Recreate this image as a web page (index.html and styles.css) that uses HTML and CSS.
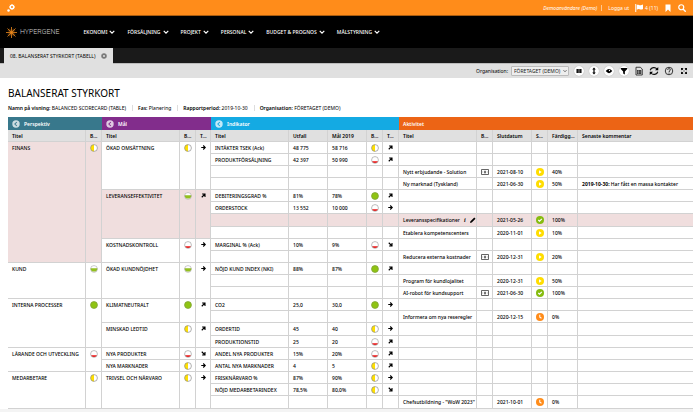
FILE: index.html
```html
<!DOCTYPE html>
<html lang="sv">
<head>
<meta charset="utf-8">
<title>Balanserat styrkort</title>
<link rel="stylesheet" href="styles.css">
</head>
<body>
<svg class="sprite" aria-hidden="true">
  <symbol id="half" viewBox="0 0 14 14"><circle cx="7" cy="7" r="6" fill="#fff"/><path d="M7 1a6 6 0 0 0 0 12z" fill="#ffe000"/><circle cx="7" cy="7" r="6" fill="none" stroke="#8c8c8c" stroke-width="1.2"/></symbol>
  <symbol id="low" viewBox="0 0 14 14"><circle cx="7" cy="7" r="6" fill="#fff"/><path d="M1.600 9h10.800a6 6 0 0 1-10.800 0z" fill="#f01414"/><circle cx="7" cy="7" r="6" fill="none" stroke="#8c8c8c" stroke-width="1"/></symbol>
  <symbol id="high" viewBox="0 0 14 14"><circle cx="7" cy="7" r="6" fill="#fff"/><path d="M1 5.500h12a6 6 0 1 1-12 0z" fill="#93c01f"/><circle cx="7" cy="7" r="6" fill="none" stroke="#8c8c8c" stroke-width=".8"/></symbol>
  <symbol id="full" viewBox="0 0 14 14"><circle cx="7" cy="7" r="6" fill="#8fc412" stroke="#81a33a" stroke-width="1.4"/></symbol>
  <symbol id="right" viewBox="0 0 10 10"><path d="M.5 5h8M4.500 1 8.500 5l-4 4" fill="none" stroke="#000" stroke-width="2.200"/></symbol>
  <symbol id="up" viewBox="0 0 10 10"><path d="M1.500 8.500l6-6M2.200 2h5.800v5.800" fill="none" stroke="#000" stroke-width="2.200"/></symbol>
  <symbol id="down" viewBox="0 0 10 10"><path d="M1.500 1.500l6 6M2.200 8h5.800V2.200" fill="none" stroke="#000" stroke-width="2.200"/></symbol>
  <symbol id="play" viewBox="0 0 14 14"><circle cx="7" cy="7" r="7" fill="#fd0"/><path d="M5.200 3.800 10 7l-4.800 3.200z" fill="#fff"/></symbol>
  <symbol id="done" viewBox="0 0 14 14"><circle cx="7" cy="7" r="7" fill="#86bc10"/><path d="M4 7l2.200 2.200L10.200 5" fill="none" stroke="#fff" stroke-width="2"/></symbol>
  <symbol id="clock" viewBox="0 0 14 14"><circle cx="7" cy="7" r="7" fill="#ff8c1a"/><path d="M6.600 3v4.200l3 2" fill="none" stroke="#fff" stroke-width="1.800"/></symbol>
  <symbol id="money" viewBox="0 0 16 12"><path d="M1 1h14v10H1z" fill="#fff" stroke="#333" stroke-width="1.500"/><ellipse cx="8" cy="6" rx="2" ry="3" fill="#666"/><path d="M3.500 4v4M12.500 4v4" stroke="#aaa"/></symbol>
  <symbol id="chev" viewBox="0 0 10 10"><path d="M1.200 3 5 6.800 8.800 3" fill="none" stroke="currentColor" stroke-width="2"/></symbol>
  <symbol id="back" viewBox="0 0 14 14"><circle cx="7" cy="7" r="6.500" fill="#fff" fill-opacity=".75"/><path d="M8.500 3.500 5 7l3.500 3.500" fill="none" stroke="currentColor" stroke-width="1.800"/></symbol>
</svg>

<header>
  <div class="topbar">
    <a class="link" href="#" aria-label="Inställningar"><svg class="i8" viewBox="0 0 16 16"><circle cx="10" cy="6" r="3.600" fill="none" stroke="#fff" stroke-width="2.800"/><path d="M10 0v2M10 10v2M4 6h2M14 6h2M5.800 1.800l1.500 1.500M12.700 8.700l1.500 1.500M14.200 1.800l-1.500 1.500" stroke="#fff" stroke-width="1.600"/><circle cx="3" cy="12.800" r="2.500" fill="#fff"/></svg></a>
    <div class="user">
      <span class="name">Demoanvändare (Demo)</span>
      <a class="link" href="#">Logga ut</a>
      <a class="link" href="#"><svg class="i8" viewBox="0 0 16 16"><path d="M1.500 0v16" stroke="#fff" stroke-width="2"/><path d="M3.500 2c3-2 5 1.500 8 .5L16 1v9c-3 2-5 1-7 .3-2-.6-3.500 0-5.500 1.200z" fill="#fff"/></svg>4 (11)</a>
      <a class="link" href="#" aria-label="Bokmärken"><svg class="i8" viewBox="0 0 16 16"><path d="M3 1h10v15L8 11l-5 5z" fill="#fff"/></svg></a>
      <a class="link" href="#" aria-label="Sök"><svg class="i8" viewBox="0 0 16 16"><circle cx="6.500" cy="6.500" r="5" fill="none" stroke="#fff" stroke-width="2.400"/><path d="M10 10l5.500 5.500" stroke="#fff" stroke-width="2.800"/></svg></a>
    </div>
  </div>
  <nav class="nav">
    <a class="logo" href="#"><svg class="star" viewBox="0 0 22 22"><g stroke="#f08a1c" stroke-width="1.600"><path d="M11 0v22M0 11h22M3 3l16 16M19 3 3 19"/><path d="M7 3.500l8 15M15 3.500l-8 15M3.500 7l15 8M18.500 7l-15 8" stroke-width=".9"/></g></svg>HYPERGENE</a>
    <a class="link" href="#">EKONOMI<svg class="i6"><use href="#chev"/></svg></a>
    <a class="link" href="#">FÖRSÄLJNING<svg class="i6"><use href="#chev"/></svg></a>
    <a class="link" href="#">PROJEKT<svg class="i6"><use href="#chev"/></svg></a>
    <a class="link" href="#">PERSONAL<svg class="i6"><use href="#chev"/></svg></a>
    <a class="link" href="#">BUDGET &amp; PROGNOS<svg class="i6"><use href="#chev"/></svg></a>
    <a class="link" href="#">MÅLSTYRNING<svg class="i6"><use href="#chev"/></svg></a>
  </nav>
  <div class="tabs">
    <div class="tab">08. BALANSERAT STYRKORT (TABELL)<button class="bare" aria-label="Stäng"><svg class="i6" viewBox="0 0 12 12"><circle cx="6" cy="6" r="5.500" fill="#777"/><path d="M3.800 3.800l4.400 4.400M8.200 3.800 3.800 8.200" stroke="#e0e0e0" stroke-width="1.500"/></svg></button></div>
  </div>
  <div class="toolbar">
    <label for="org">Organisation:</label>
    <span class="pick"><select id="org"><option>FÖRETAGET (DEMO)</option></select><svg><use href="#chev"/></svg></span>
    <button class="tool round" aria-label="Kolumner"><svg viewBox="0 0 20 20"><path d="M5 6h2.800v8H5zM8.600 6h2.800v8H8.600zM12.200 6H15v8h-2.800z"/></svg></button>
    <button class="tool round" aria-label="Radhöjd"><svg viewBox="0 0 20 20"><path d="M10 3l3.500 4h-2.300v6h2.300L10 17l-3.500-4h2.300V7H6.500z"/></svg></button>
    <button class="tool round" aria-label="Visa"><svg viewBox="0 0 20 20"><path d="M3.500 10q6.500-8.500 13 0-6.500 8.500-13 0z"/><circle cx="11" cy="9" r="1.300" fill="#fff"/></svg></button>
    <button class="tool round" aria-label="Filter"><svg viewBox="0 0 20 20"><path d="M3.500 4h13v2l-4.800 4.800V17l-3.400-2v-4.200L3.500 6z"/></svg></button>
    <button class="tool" aria-label="Excel"><svg viewBox="0 0 20 20"><path d="M4 2.500h8.500L16.500 6v12H4z" fill="none" stroke="#222" stroke-width="1.700"/><path d="M6 8.500h8.500v7H6z"/><path d="M6 10.800h8.500M6 13.200h8.500M9 8.500v7" stroke="#ddd" stroke-width=".8"/></svg></button>
    <button class="tool" aria-label="Uppdatera"><svg viewBox="0 0 20 20"><path d="M2.500 8.500A7.500 6.500 0 0 1 16 6M17.500 11.500A7.500 6.500 0 0 1 4 14" fill="none" stroke="#111" stroke-width="2.300"/><path d="M18.500 2v6.500h-6.500zM1.500 18v-6.500H8z"/></svg></button>
    <button class="tool" aria-label="Hjälp"><svg viewBox="0 0 20 20"><circle cx="10" cy="10" r="7.500" fill="none" stroke="#222" stroke-width="1.800"/><path d="M7.300 8c0-3.600 5.400-3.600 5.400-.4 0 2-2.700 2-2.700 4.400M10 13.200v2" fill="none" stroke="#222" stroke-width="1.900"/></svg></button>
    <button class="tool" aria-label="Helskärm"><svg viewBox="0 0 20 20"><path d="M4 4h5L4 9zM16 4v5l-5-5zM4 16v-5l5 5zM16 16h-5l5-5z"/><path d="M5 5l3.500 3.500M15 5l-3.500 3.500M5 15l3.500-3.500M15 15l-3.500-3.500" stroke="#111" stroke-width="1.800"/></svg></button>
  </div>
</header>

<main>
  <h1>BALANSERAT STYRKORT</h1>
  <ul class="meta">
    <li><b>Namn på visning:</b> BALANCED SCORECARD (TABLE)</li>
    <li><b>Fas:</b> Planering</li>
    <li><b>Rapportperiod:</b> 2019-10-30</li>
    <li><b>Organisation:</b> FÖRETAGET (DEMO)</li>
  </ul>
  <table>
    <colgroup>
      <col class="wide"><col class="icon">
      <col class="wide"><col class="icon"><col class="trend">
      <col class="wide"><col class="value"><col class="value"><col class="icon"><col class="icon">
      <col class="wide"><col class="icon"><col class="value"><col class="icon"><col class="share"><col>
    </colgroup>
    <thead>
      <tr class="groups">
        <th colspan="2" class="perspective"><span class="group"><svg class="i8"><use href="#back"/></svg>Perspektiv</span></th>
        <th colspan="3" class="goal"><span class="group"><svg class="i8"><use href="#back"/></svg>Mål</span></th>
        <th colspan="5" class="indicator"><span class="group"><svg class="i8"><use href="#back"/></svg>Indikator</span></th>
        <th colspan="6" class="activity"><span class="group">Aktivitet</span></th>
      </tr>
      <tr class="heads"><th>Titel</th><th>B...</th><th>Titel</th><th>B...</th><th>T...</th><th>Titel</th><th>Utfall</th><th>Mål 2019</th><th>B...</th><th>T...</th><th>Titel</th><th>B...</th><th>Slutdatum</th><th>S...</th><th>Färdigg...</th><th>Senaste kommentar</th></tr>
    </thead>
    <tbody>
      <tr><td rowspan="10" class="hot">FINANS</td><td rowspan="10" class="hot ic"><svg><use href="#half"/></svg></td><td rowspan="4">ÖKAD OMSÄTTNING</td><td rowspan="4" class="ic"><svg><use href="#half"/></svg></td><td rowspan="4" class="tr"><svg><use href="#right"/></svg></td><td>INTÄKTER TSEK (Ack)</td><td>48 775</td><td>58 716</td><td class="ic"><svg><use href="#half"/></svg></td><td class="tr"><svg><use href="#up"/></svg></td><td></td><td></td><td></td><td></td><td></td><td></td></tr>
      <tr><td>PRODUKTFÖRSÄLJNING</td><td>42 397</td><td>50 990</td><td class="ic"><svg><use href="#low"/></svg></td><td class="tr"><svg><use href="#up"/></svg></td><td></td><td></td><td></td><td></td><td></td><td></td></tr>
      <tr><td></td><td></td><td></td><td></td><td></td><td>Nytt erbjudande - Solution</td><td class="ic"><svg><use href="#money"/></svg></td><td>2021-08-10</td><td class="ic"><svg><use href="#play"/></svg></td><td>40%</td><td></td></tr>
      <tr><td></td><td></td><td></td><td></td><td></td><td>Ny marknad (Tyskland)</td><td></td><td>2021-06-30</td><td class="ic"><svg><use href="#play"/></svg></td><td>50%</td><td><b>2019-10-30:</b> Har fått en massa kontakter</td></tr>
      <tr><td rowspan="4" class="hot">LEVERANSEFFEKTIVITET</td><td rowspan="4" class="hot ic"><svg><use href="#high"/></svg></td><td rowspan="4" class="hot tr"><svg><use href="#up"/></svg></td><td>DEBITERINGSGRAD %</td><td>81%</td><td>78%</td><td class="ic"><svg><use href="#full"/></svg></td><td class="tr"><svg><use href="#up"/></svg></td><td></td><td></td><td></td><td></td><td></td><td></td></tr>
      <tr><td>ORDERSTOCK</td><td>13 552</td><td>10 000</td><td class="ic"><svg><use href="#low"/></svg></td><td class="tr"><svg><use href="#right"/></svg></td><td></td><td></td><td></td><td></td><td></td><td></td></tr>
      <tr class="hot tall"><td></td><td></td><td></td><td></td><td></td><td><span class="edit">Leveransspecifikationer<button class="bare info" aria-label="Info">i</button><button class="bare" aria-label="Redigera"><svg class="i6" viewBox="0 0 12 12"><path d="M0 12l1-3.500L8.500 1 11 3.500 3.500 11z"/></svg></button></span></td><td></td><td>2021-05-26</td><td class="ic"><svg><use href="#done"/></svg></td><td>100%</td><td></td></tr>
      <tr><td></td><td></td><td></td><td></td><td></td><td>Etablera kompetenscenters</td><td></td><td>2020-11-01</td><td class="ic"><svg><use href="#play"/></svg></td><td>10%</td><td></td></tr>
      <tr><td rowspan="2">KOSTNADSKONTROLL</td><td rowspan="2" class="ic"><svg><use href="#low"/></svg></td><td rowspan="2" class="tr"><svg><use href="#right"/></svg></td><td>MARGINAL % (Ack)</td><td>10%</td><td>9%</td><td class="ic"><svg><use href="#low"/></svg></td><td class="tr"><svg><use href="#down"/></svg></td><td></td><td></td><td></td><td></td><td></td><td></td></tr>
      <tr><td></td><td></td><td></td><td></td><td></td><td>Reducera externa kostnader</td><td class="ic"><svg><use href="#money"/></svg></td><td>2020-12-31</td><td class="ic"><svg><use href="#play"/></svg></td><td>20%</td><td></td></tr>
      <tr><td rowspan="3">KUND</td><td rowspan="3" class="ic"><svg><use href="#high"/></svg></td><td rowspan="3">ÖKAD KUNDNÖJDHET</td><td rowspan="3" class="ic"><svg><use href="#high"/></svg></td><td rowspan="3" class="tr"><svg><use href="#right"/></svg></td><td>NÖJD KUND INDEX (NKI)</td><td>88%</td><td>87%</td><td class="ic"><svg><use href="#full"/></svg></td><td class="tr"><svg><use href="#up"/></svg></td><td></td><td></td><td></td><td></td><td></td><td></td></tr>
      <tr><td></td><td></td><td></td><td></td><td></td><td>Program för kundlojalitet</td><td></td><td>2020-12-31</td><td class="ic"><svg><use href="#play"/></svg></td><td>50%</td><td></td></tr>
      <tr><td></td><td></td><td></td><td></td><td></td><td>AI-robot för kundsupport</td><td class="ic"><svg><use href="#money"/></svg></td><td>2021-06-30</td><td class="ic"><svg><use href="#done"/></svg></td><td>100%</td><td></td></tr>
      <tr><td rowspan="4">INTERNA PROCESSER</td><td rowspan="4" class="ic"><svg><use href="#full"/></svg></td><td rowspan="2">KLIMATNEUTRALT</td><td rowspan="2" class="ic"><svg><use href="#full"/></svg></td><td rowspan="2" class="tr"><svg><use href="#up"/></svg></td><td>CO2</td><td>25,0</td><td>30,0</td><td class="ic"><svg><use href="#full"/></svg></td><td class="tr"><svg><use href="#right"/></svg></td><td></td><td></td><td></td><td></td><td></td><td></td></tr>
      <tr><td></td><td></td><td></td><td></td><td></td><td>Informera om nya reseregler</td><td></td><td>2020-12-15</td><td class="ic"><svg><use href="#clock"/></svg></td><td>0%</td><td></td></tr>
      <tr class="tall"><td rowspan="2">MINSKAD LEDTID</td><td rowspan="2" class="ic"><svg><use href="#half"/></svg></td><td rowspan="2" class="tr"><svg><use href="#up"/></svg></td><td>ORDERTID</td><td>45</td><td>40</td><td class="ic"><svg><use href="#half"/></svg></td><td class="tr"><svg><use href="#right"/></svg></td><td></td><td></td><td></td><td></td><td></td><td></td></tr>
      <tr><td>PRODUKTIONSTID</td><td>25</td><td>20</td><td class="ic"><svg><use href="#low"/></svg></td><td class="tr"><svg><use href="#up"/></svg></td><td></td><td></td><td></td><td></td><td></td><td></td></tr>
      <tr><td rowspan="2">LÄRANDE OCH UTVECKLING</td><td rowspan="2" class="ic"><svg><use href="#low"/></svg></td><td>NYA PRODUKTER</td><td class="ic"><svg><use href="#low"/></svg></td><td class="tr"><svg><use href="#down"/></svg></td><td>ANDEL NYA PRODUKTER</td><td>15%</td><td>20%</td><td class="ic"><svg><use href="#low"/></svg></td><td class="tr"><svg><use href="#up"/></svg></td><td></td><td></td><td></td><td></td><td></td><td></td></tr>
      <tr><td>NYA MARKNADER</td><td class="ic"><svg><use href="#half"/></svg></td><td class="tr"><svg><use href="#right"/></svg></td><td>ANTAL NYA MARKNADER</td><td>4</td><td>5</td><td class="ic"><svg><use href="#half"/></svg></td><td class="tr"><svg><use href="#up"/></svg></td><td></td><td></td><td></td><td></td><td></td><td></td></tr>
      <tr><td rowspan="3">MEDARBETARE</td><td rowspan="3" class="ic"><svg><use href="#half"/></svg></td><td rowspan="3">TRIVSEL OCH NÄRVARO</td><td rowspan="3" class="ic"><svg><use href="#half"/></svg></td><td rowspan="3" class="tr"><svg><use href="#right"/></svg></td><td>FRISKNÄRVARO %</td><td>87%</td><td>90%</td><td class="ic"><svg><use href="#half"/></svg></td><td class="tr"><svg><use href="#right"/></svg></td><td></td><td></td><td></td><td></td><td></td><td></td></tr>
      <tr><td>NÖJD MEDARBETARINDEX</td><td>78,5%</td><td>80,0%</td><td class="ic"><svg><use href="#half"/></svg></td><td class="tr"><svg><use href="#down"/></svg></td><td></td><td></td><td></td><td></td><td></td><td></td></tr>
      <tr class="tall"><td></td><td></td><td></td><td></td><td></td><td>Chefsutbildning - "WoW 2023"</td><td></td><td>2021-10-01</td><td class="ic"><svg><use href="#clock"/></svg></td><td>0%</td><td></td></tr>
    </tbody>
  </table>
</main>
</body>
</html>
```
FILE: styles.css
```css
* { box-sizing: border-box; }
body { margin: 0; background: #f4f4f4; color: #000; font: 400 5px/6px "Noto Sans", sans-serif; }
svg { display: block; flex: none; }
.sprite { position: absolute; width: 0; height: 0; }
.i6 { width: 6px; height: 6px; }
.i8 { width: 8px; height: 8px; }
.link { display: flex; align-items: center; gap: 2px; color: #fff; text-decoration: none; }
.bare { display: block; padding: 0; border: 0; background: none; color: inherit; font: inherit; }

.topbar { display: flex; justify-content: space-between; align-items: center; height: 16px; padding: 0 7px; background: #ff8c1a; border-bottom: 1px solid #a85c10; }
.user { display: flex; align-items: center; gap: 6px; color: #fff; }
.name { padding-right: 4px; border-right: 1px solid #ffc890; font-style: italic; }

.nav { display: flex; align-items: center; gap: 12px; height: 32px; padding: 0 6px; background: #000; font-weight: 500; }
.logo { display: flex; align-items: center; gap: 3px; margin-right: 12px; color: #d0d0d0; font: 300 7px/10px Roboto, sans-serif; text-decoration: none; }
.star { width: 11px; height: 11px; }

.tabs { display: flex; height: 15px; padding-left: 4px; background: #1a1a1a; }
.tab { display: flex; align-items: center; gap: 6px; height: 16px; padding: 0 6px; background: #e0e0e0; }

.toolbar { display: flex; align-items: center; justify-content: flex-end; gap: 5px; height: 15px; padding-right: 4px; border-top: 1px solid #bbb; background: #e0e0e0; }
.toolbar label { margin-right: -2px; }
.pick { position: relative; width: 58px; }
.pick select { display: block; width: 100%; height: 10px; padding: 0 2px; border: 1px solid #bbb; border-radius: 1px; background: #eee; color: #222; font: inherit; appearance: none; }
.pick svg { position: absolute; top: 3px; right: 2px; width: 4px; height: 4px; color: #444; }
.tool { width: 10px; height: 10px; padding: 0; border: 0; background: none; }
.tool svg { width: 10px; height: 10px; }
.round { border-radius: 50%; background: #fff; box-shadow: 0 0 1px #999; }

main { padding: 8px 0 0 8px; background: #fff; }
h1 { margin: 0; font: 400 10px/14px "Noto Sans", sans-serif; }
.meta { display: flex; margin: 5px 0 6px; padding: 0; list-style: none; }
.meta li { padding-right: 6px; }
.meta li + li { padding-left: 5px; border-left: 1px solid #ddd; }

table { width: 100%; border-collapse: separate; border-spacing: 0; table-layout: fixed; }
.wide { width: 78px; }
.icon { width: 16px; }
.trend { width: 15px; }
.value { width: 39px; }
.share { width: 30px; }
tr { height: 12px; }
.tall { height: 13px; }
th, td { padding: 3px 0 2px 4px; border: 0 solid #d2d2d2; border-width: 0 1px 1px 0; text-align: left; vertical-align: top; white-space: nowrap; overflow: hidden; }
th:last-child, td:last-child { border-right: 0; }
th, b { font-weight: 600; }
td { font-weight: 500; }
td b { font-weight: 700; }
.groups { height: 13px; }
.groups th { padding: 0 4px; border: 0; color: #fff; vertical-align: middle; }
.group { display: flex; align-items: center; gap: 4px; }
.perspective { background: #38788c; }
.perspective svg { color: #38788c; }
.goal { background: #822d8c; }
.goal svg { color: #822d8c; }
.indicator { background: #14aae3; }
.indicator svg { color: #14aae3; }
.activity { background: #ec6415; }
.heads th { background: #e0e0e0; }
.hot, .hot td { background: #f0dede; }
.ic, .tr { padding: 2px 0 0 4px; }
.ic svg { width: 8px; height: 8px; }
.tr { padding: 3px 0 0 5px; }
.tr svg { width: 5px; height: 5px; }
.edit { display: flex; align-items: center; gap: 4px; }
.info { font: italic 900 6px/6px "Liberation Serif", serif; }
```
